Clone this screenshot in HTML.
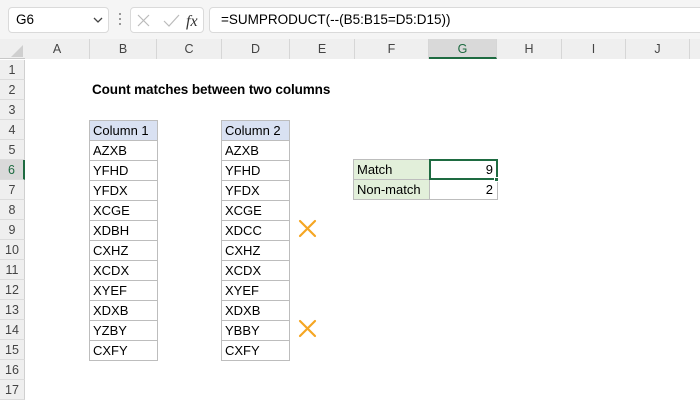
<!DOCTYPE html>
<html><head><style>
*{margin:0;padding:0;box-sizing:border-box}
body{width:700px;height:400px;position:relative;overflow:hidden;background:#fff;font-family:"Liberation Sans",Arial,sans-serif;font-size:13px;color:#000}
.a{position:absolute}
.ch{position:absolute;top:39px;height:20px;line-height:20px;text-align:center;color:#444;font-size:12.5px;border-right:1px solid #d6d6d6;background:#efefef}
.rh{position:absolute;left:0;width:25px;height:20px;line-height:20px;text-align:center;color:#444;font-size:12.5px;background:#efefef;border-bottom:1px solid #dcdcdc;border-right:1px solid #d0d0d0}
.c{position:absolute;height:21px;line-height:20px;border:1px solid #bdbdbd;padding-left:3px;font-size:13px}
</style></head><body>
<div class="a" style="left:0;top:0;width:700px;height:39px;background:#f5f5f5"></div>
<div class="a" style="left:8px;top:7px;width:101px;height:26px;background:#fff;border:1px solid #dadada;border-radius:4px;line-height:24px;padding-left:7px;font-size:13.5px">G6</div>
<svg class="a" style="left:93px;top:16px" width="10" height="8"><path d="M1 2 L5 6 L9 2" stroke="#444" stroke-width="1.3" fill="none"/></svg>
<div class="a" style="left:119px;top:13px;width:2px;height:2px;background:#999;box-shadow:0 5px #999,0 10px #999"></div>
<div class="a" style="left:130px;top:7px;width:74px;height:26px;background:#fff;border:1px solid #dadada;border-radius:4px"></div>
<svg class="a" style="left:136px;top:12px" width="70" height="18"><path d="M2 3 L13 14 M13 3 L2 14" stroke="#bbb" stroke-width="1.2"/><path d="M28 9 L33 14 L43 3" stroke="#bbb" stroke-width="1.2" fill="none"/><text x="50" y="14" font-family="Liberation Serif" font-style="italic" font-size="16" fill="#333">fx</text></svg>
<div class="a" style="left:209px;top:7px;width:500px;height:26px;background:#fff;border:1px solid #dadada;border-radius:4px;line-height:24px;padding-left:11px;font-size:13.5px">=SUMPRODUCT(--(B5:B15=D5:D15))</div>
<div class="a" style="left:0;top:39px;width:700px;height:20px;background:#efefef;border-bottom:1px solid #c8c8c8"></div>
<svg class="a" style="left:10px;top:44px" width="14" height="14"><path d="M13 1 L13 13 L1 13 Z" fill="#cfcfcf"/></svg>
<div class="ch" style="left:25px;width:65px">A</div>
<div class="ch" style="left:90px;width:67px">B</div>
<div class="ch" style="left:157px;width:65px">C</div>
<div class="ch" style="left:222px;width:68px">D</div>
<div class="ch" style="left:290px;width:65px">E</div>
<div class="ch" style="left:355px;width:74px">F</div>
<div class="ch" style="left:429px;width:68px;background:#d9d9d9;color:#1e6b41;border-bottom:2px solid #1e6b41">G</div>
<div class="ch" style="left:497px;width:65px">H</div>
<div class="ch" style="left:562px;width:64px">I</div>
<div class="ch" style="left:626px;width:64px">J</div>
<div class="ch" style="left:690px;width:20px"></div>

<div class="rh" style="top:60px">1</div><div class="rh" style="top:80px">2</div><div class="rh" style="top:100px">3</div><div class="rh" style="top:120px">4</div><div class="rh" style="top:140px">5</div>
<div class="rh" style="top:160px;background:#d9d9d9;color:#1e6b41;border-right:2px solid #1e6b41">6</div>
<div class="rh" style="top:180px">7</div><div class="rh" style="top:200px">8</div><div class="rh" style="top:220px">9</div><div class="rh" style="top:240px">10</div><div class="rh" style="top:260px">11</div><div class="rh" style="top:280px">12</div><div class="rh" style="top:300px">13</div><div class="rh" style="top:320px">14</div><div class="rh" style="top:340px">15</div><div class="rh" style="top:360px">16</div><div class="rh" style="top:380px">17</div>

<div class="a" style="left:92px;top:80px;height:20px;line-height:20px;font-weight:bold;font-size:13.5px;letter-spacing:-0.1px">Count matches between two columns</div>

<div class="c" style="left:89px;top:120px;width:69px;background:#d9e1f2">Column 1</div>
<div class="c" style="left:89px;top:140px;width:69px">AZXB</div>
<div class="c" style="left:89px;top:160px;width:69px">YFHD</div>
<div class="c" style="left:89px;top:180px;width:69px">YFDX</div>
<div class="c" style="left:89px;top:200px;width:69px">XCGE</div>
<div class="c" style="left:89px;top:220px;width:69px">XDBH</div>
<div class="c" style="left:89px;top:240px;width:69px">CXHZ</div>
<div class="c" style="left:89px;top:260px;width:69px">XCDX</div>
<div class="c" style="left:89px;top:280px;width:69px">XYEF</div>
<div class="c" style="left:89px;top:300px;width:69px">XDXB</div>
<div class="c" style="left:89px;top:320px;width:69px">YZBY</div>
<div class="c" style="left:89px;top:340px;width:69px">CXFY</div>

<div class="c" style="left:221px;top:120px;width:69px;background:#d9e1f2">Column 2</div>
<div class="c" style="left:221px;top:140px;width:69px">AZXB</div>
<div class="c" style="left:221px;top:160px;width:69px">YFHD</div>
<div class="c" style="left:221px;top:180px;width:69px">YFDX</div>
<div class="c" style="left:221px;top:200px;width:69px">XCGE</div>
<div class="c" style="left:221px;top:220px;width:69px">XDCC</div>
<div class="c" style="left:221px;top:240px;width:69px">CXHZ</div>
<div class="c" style="left:221px;top:260px;width:69px">XCDX</div>
<div class="c" style="left:221px;top:280px;width:69px">XYEF</div>
<div class="c" style="left:221px;top:300px;width:69px">XDXB</div>
<div class="c" style="left:221px;top:320px;width:69px">YBBY</div>
<div class="c" style="left:221px;top:340px;width:69px">CXFY</div>

<svg class="a" style="left:298px;top:219px" width="20" height="20"><path d="M2 2 L17 17 M17 2 L2 17" stroke="#f5a623" stroke-width="2.2" stroke-linecap="round"/></svg>
<svg class="a" style="left:298px;top:319px" width="20" height="20"><path d="M2 2 L17 17 M17 2 L2 17" stroke="#f5a623" stroke-width="2.2" stroke-linecap="round"/></svg>

<div class="c" style="left:353px;top:159px;width:77px;background:#e2efda">Match</div>
<div class="c" style="left:353px;top:179px;width:77px;background:#e2efda">Non-match</div>
<div class="c" style="left:429px;top:179px;width:69px;text-align:right;padding-right:4px">2</div>
<div class="a" style="left:429px;top:159px;width:69px;height:21px;border:2px solid #1e6b41;line-height:17px;text-align:right;padding-right:3px">9</div>
<div class="a" style="left:494px;top:177px;width:5px;height:5px;background:#1e6b41;border:1px solid #fff"></div>
</body></html>
